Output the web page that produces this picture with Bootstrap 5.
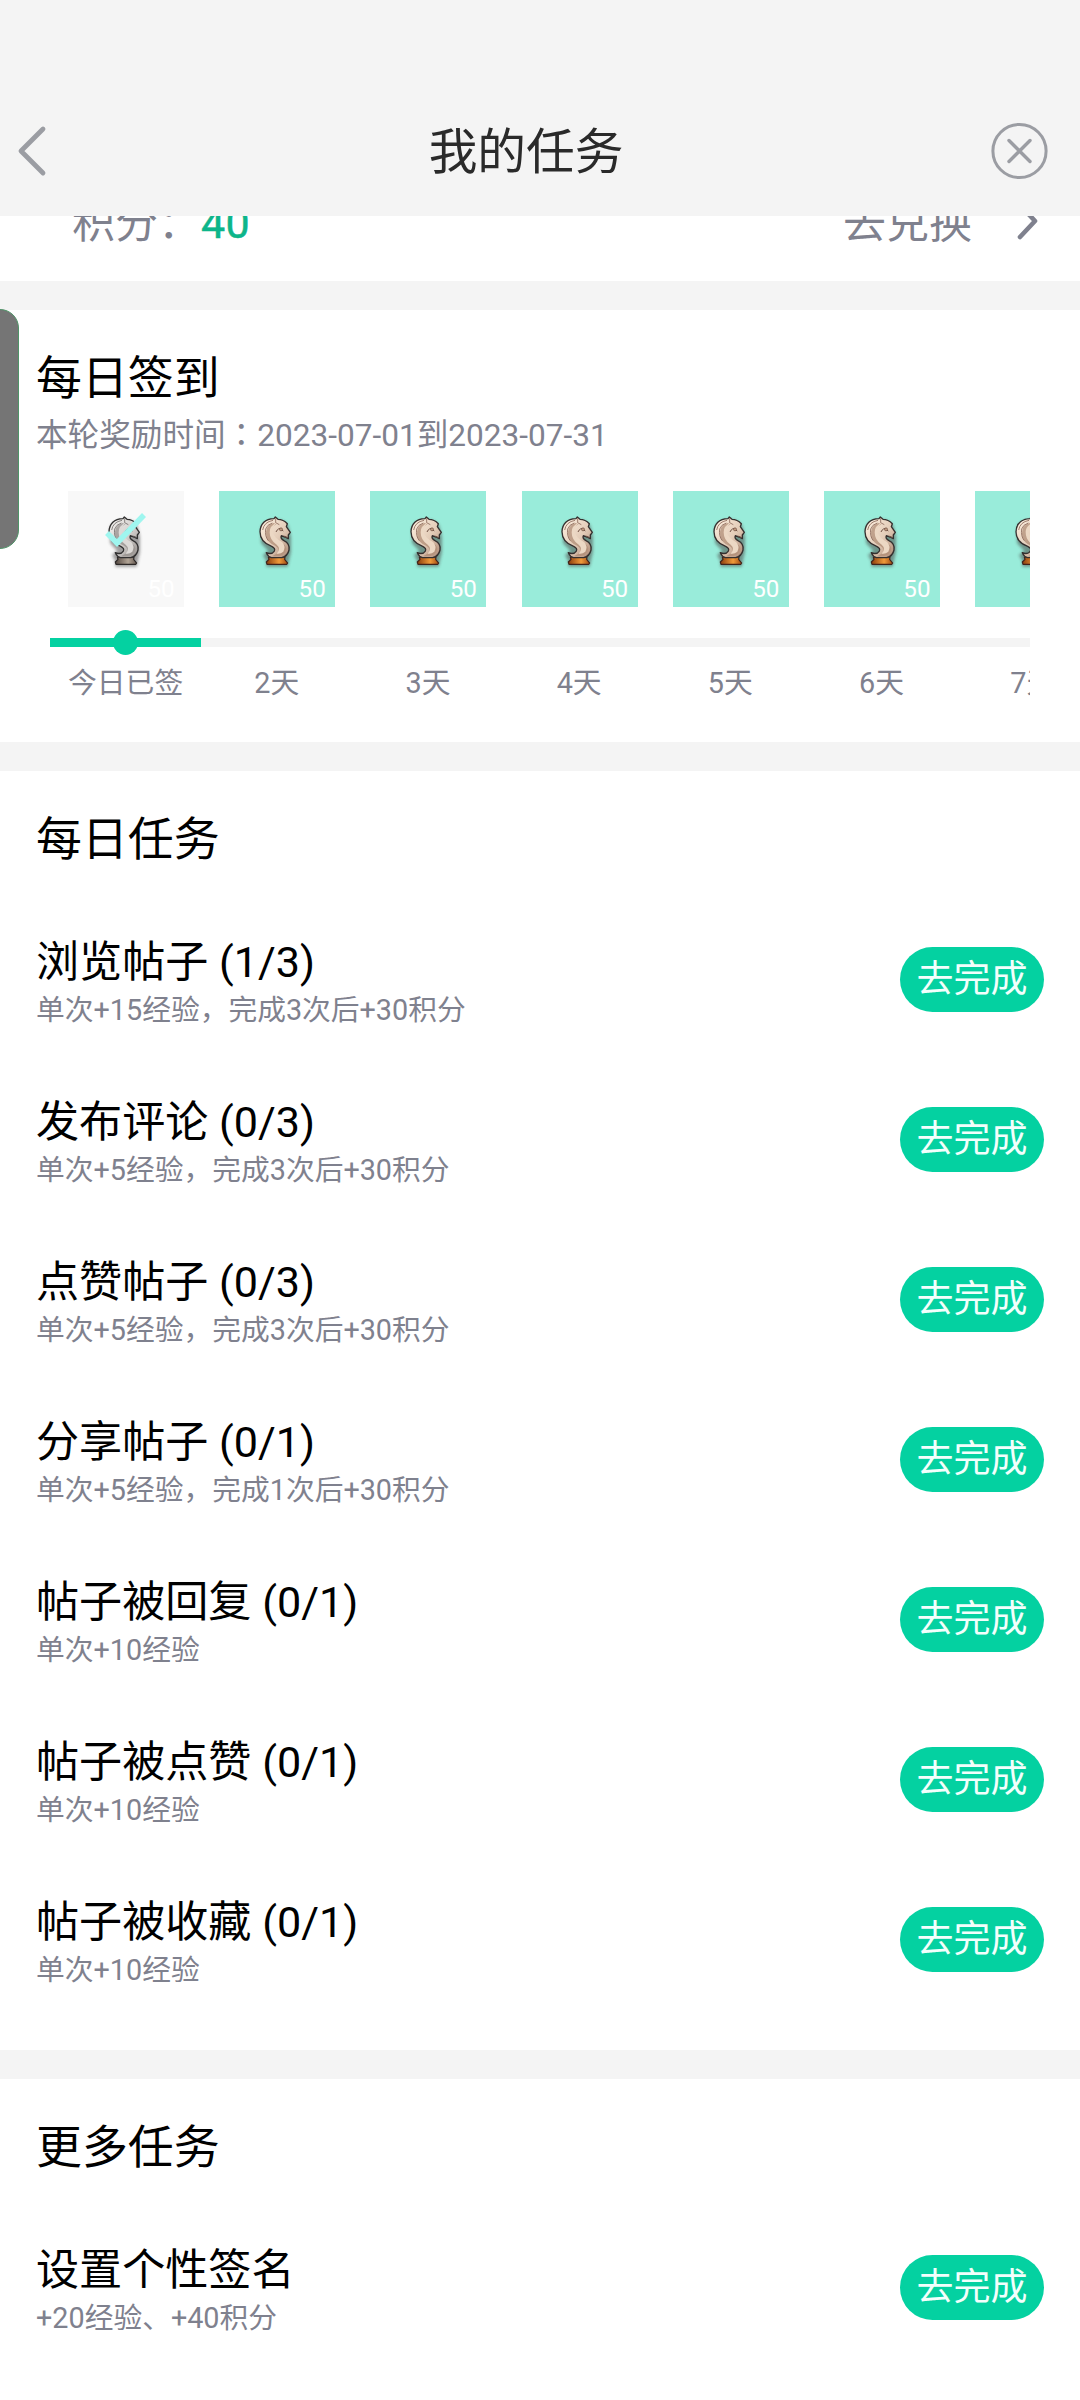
<!DOCTYPE html>
<html lang="zh-CN">
<head>
<meta charset="utf-8">
<meta name="viewport" content="width=device-width, initial-scale=1">
<title>我的任务</title>
<link href="https://cdn.jsdelivr.net/npm/bootstrap@5.3.0/dist/css/bootstrap.min.css" rel="stylesheet">
<style>
  body { font-family: Roboto, "Noto Sans CJK SC", sans-serif; background: #f4f4f4; color: #000; height: 2400px; overflow: hidden; }
  .app-header { height: 216px; padding: 86px 32px 0 16px; color: #2a2a2a; }
  .app-title { font-size: 48.7px; line-height: 130px; left: 0; right: 28px; top: 88px; }
  .app-header svg { display: block; }
  .grey-txt { color: #7f818e; }
  .points-row { height: 65px; margin-bottom: 29px; padding: 0 40px 0 72px; font-size: 43px; line-height: 60px; }
  .points-row > div { margin-top: -23px; height: 60px; }
  .points-row svg { margin: -3px 0 0 44px; }
  .points-value { color: #0db58a; letter-spacing: .4px; -webkit-text-stroke: .5px #0db58a; }
  .panel { margin-bottom: 29px; background: #fff; }
  .panel-title { font-size: 45.9px; line-height: 60px; font-weight: 400; margin: 0; }
  .signin { height: 432px; padding: 38px 50px 0 36px; }
  .signin-period { font-size: 31.6px; line-height: 44px; margin-top: 2px; }
  .signin-days { margin: 33px 0 0 14px; }
  .day { flex: 0 0 151.2px; }
  .day-tile { width: 116px; height: 116px; background: #99ecda; left: .5px; }
  .day-tile svg { position: absolute; left: 36.7px; top: 22.3px; overflow: visible; }
  .day-tile span { position: absolute; right: 9.5px; bottom: 5px; font-size: 24.2px; line-height: 26px; color: #fff; }
  .day-tile.signed { background: #f8f8f8; }
  .day-track { height: 9px; width: 100%; margin: 31px 0; background: #f4f4f4; }
  .day-track.passed { background: #04d1a1; }
  .day-dot { width: 25.5px; height: 25.5px; border-radius: 50%; background: #04d1a1; }
  .day-label { font-size: 28.8px; line-height: 40px; margin-top: -15px; }
  .tasks { padding: 38px 36px 31px; }
  .tasks .panel-title { margin-bottom: 30px; }
  .tasks:last-of-type { padding-bottom: 40px; margin-bottom: 0; }
  .task { height: 160px; }
  .task-name { font-size: 43.1px; line-height: 50px; padding-top: 1px; }
  .task-reward { font-size: 28.75px; line-height: 42px; padding-top: 1px; margin-bottom: -10px; }
  .btn-go { width: 144px; height: 65px; padding: 0; font-size: 37px; line-height: 63px; background: #04d1a1; color: #f2fffc; border: 0; }
  .side-handle { position: absolute; left: -20px; top: 309px; width: 39px; height: 240px; border-radius: 19px; background: #757575; border: 1px solid #4f9468; }
</style>
</head>
<body class="position-relative">
<svg width="0" height="0" class="position-absolute">
  <defs>
    <linearGradient id="body-g" x1="0" y1="0" x2="1" y2="1"><stop offset="0" stop-color="#fff3e4"/><stop offset=".55" stop-color="#e3ccb8"/><stop offset="1" stop-color="#a98470"/></linearGradient>
    <linearGradient id="base-g" x1="0" x2="1"><stop offset="0" stop-color="#8c3d0c"/><stop offset=".6" stop-color="#f09a3a"/><stop offset="1" stop-color="#a34b12"/></linearGradient>
    <filter id="soft" x="-30%" y="-30%" width="160%" height="160%"><feGaussianBlur stdDeviation="4"/></filter>
    <symbol id="knight" viewBox="770 100 120 170" overflow="visible">
      <path d="M784 140C792 112 850 105 866 134L874 168L874 212L864 257H800L800 240L790 222L806 210L784 186Z" fill="#3b2a2a" opacity=".45" filter="url(#soft)" transform="translate(1 4)"/>
      <path d="M807 232L857 232L856 239L865 250L862 254H803L801 247L809 239Z" fill="url(#base-g)" stroke="#40231c" stroke-width="3.5" stroke-linejoin="round"/>
      <path d="M828 112L836 119Q852 119 864 132L861 141L873 158L867 166L867 177L857 172L846 168Q842 176 854 183Q872 192 869 211Q865 230 847 234H817Q806 231 801 219Q817 226 825 214Q829 206 817 200Q782 187 782 156Q784 119 824 117Z" fill="url(#body-g)" stroke="#35302f" stroke-width="4" stroke-linejoin="round"/>
      <path d="M823 130Q795 138 801 171Q806 190 827 198Q843 207 835 220L818 230Q858 232 861 207Q859 193 841 187Q815 178 814 159Q813 143 831 134Z" fill="#b08d77" opacity=".75"/>
      <path d="M834 128Q817 143 820 159Q825 174 849 188Q860 200 852 216Q843 224 832 222Q846 207 832 195Q811 182 811 158Q810 139 834 128Z" fill="#ecd8c4"/>
      <path d="M790 151Q794 127 821 122M807 183Q796 170 799 148Q803 135 819 130M829 116L829 129L840 135" fill="none" stroke="#8b695a" stroke-width="2.5"/>
      <path d="M830 157Q836 143 848 148M841 147L852 154M853 169L864 173" fill="none" stroke="#6f5043" stroke-width="3"/>
      <circle cx="845" cy="149" r="4.5" fill="#c09a80" stroke="#6f5043" stroke-width="2"/>
    </symbol>
  </defs>
</svg>

<header class="app-header d-flex justify-content-between align-items-center">
  <svg width="34" height="52" viewBox="0 0 34 52" fill="none" stroke="#9b9da3" stroke-width="4.8" stroke-linecap="round" stroke-linejoin="round"><path d="M27 4L5 26L27 48"/></svg>
  <h1 class="app-title position-absolute text-center fw-normal m-0">我的任务</h1>
  <svg width="58" height="58" viewBox="0 0 58 58" fill="none" stroke="#9b9da3" stroke-width="3" stroke-linecap="round"><circle cx="29.5" cy="29" r="26.6"/><path d="M19 18.5L40 39.5M40 18.5L19 39.5" stroke-width="3.4"/></svg>
</header>

<section class="points-row bg-white grey-txt overflow-hidden d-flex justify-content-between align-items-start">
  <div>积分：<span class="points-value">40</span></div>
  <div class="d-flex align-items-center">去兑换
    <svg width="24" height="40" viewBox="0 0 24 40" fill="none" stroke="#7f818e" stroke-width="4.6" stroke-linecap="round" stroke-linejoin="round"><path d="M4 3L19 19L4 35"/></svg>
  </div>
</section>

<section class="panel signin">
  <h2 class="panel-title">每日签到</h2>
  <div class="signin-period grey-txt">本轮奖励时间<span lang="zh-TW" style="font-family:'Noto Sans CJK TC'">：</span>2023-07-01到2023-07-31</div>
  <div class="signin-days d-flex overflow-hidden grey-txt">
    <div class="day d-flex flex-column align-items-center">
      <div class="day-tile signed position-relative"><svg width="40" height="56.7"><use href="#knight" style="filter:grayscale(.85)"/><path d="M2 20L12 30L39 2" fill="none" stroke="#9ff6ef" stroke-width="5.5"/></svg><span>50</span></div>
      <div class="day-track passed d-flex justify-content-center align-items-center"><div class="day-dot flex-shrink-0"></div></div>
      <div class="day-label">今日已签</div>
    </div>
    <div class="day d-flex flex-column align-items-center">
      <div class="day-tile position-relative"><svg width="40" height="56.7"><use href="#knight"/></svg><span>50</span></div>
      <div class="day-track"></div><div class="day-label">2天</div>
    </div>
    <div class="day d-flex flex-column align-items-center">
      <div class="day-tile position-relative"><svg width="40" height="56.7"><use href="#knight"/></svg><span>50</span></div>
      <div class="day-track"></div><div class="day-label">3天</div>
    </div>
    <div class="day d-flex flex-column align-items-center">
      <div class="day-tile position-relative"><svg width="40" height="56.7"><use href="#knight"/></svg><span>50</span></div>
      <div class="day-track"></div><div class="day-label">4天</div>
    </div>
    <div class="day d-flex flex-column align-items-center">
      <div class="day-tile position-relative"><svg width="40" height="56.7"><use href="#knight"/></svg><span>50</span></div>
      <div class="day-track"></div><div class="day-label">5天</div>
    </div>
    <div class="day d-flex flex-column align-items-center">
      <div class="day-tile position-relative"><svg width="40" height="56.7"><use href="#knight"/></svg><span>50</span></div>
      <div class="day-track"></div><div class="day-label">6天</div>
    </div>
    <div class="day d-flex flex-column align-items-center">
      <div class="day-tile position-relative"><svg width="40" height="56.7"><use href="#knight"/></svg></div>
      <div class="day-track"></div><div class="day-label">7天</div>
    </div>
  </div>
</section>

<section class="panel tasks">
  <h2 class="panel-title">每日任务</h2>
  <div class="task d-flex justify-content-between align-items-center"><div><div class="task-name">浏览帖子 (1/3)</div><div class="task-reward grey-txt">单次+15经验，完成3次后+30积分</div></div><button class="btn btn-go rounded-pill">去完成</button></div>
  <div class="task d-flex justify-content-between align-items-center"><div><div class="task-name">发布评论 (0/3)</div><div class="task-reward grey-txt">单次+5经验，完成3次后+30积分</div></div><button class="btn btn-go rounded-pill">去完成</button></div>
  <div class="task d-flex justify-content-between align-items-center"><div><div class="task-name">点赞帖子 (0/3)</div><div class="task-reward grey-txt">单次+5经验，完成3次后+30积分</div></div><button class="btn btn-go rounded-pill">去完成</button></div>
  <div class="task d-flex justify-content-between align-items-center"><div><div class="task-name">分享帖子 (0/1)</div><div class="task-reward grey-txt">单次+5经验，完成1次后+30积分</div></div><button class="btn btn-go rounded-pill">去完成</button></div>
  <div class="task d-flex justify-content-between align-items-center"><div><div class="task-name">帖子被回复 (0/1)</div><div class="task-reward grey-txt">单次+10经验</div></div><button class="btn btn-go rounded-pill">去完成</button></div>
  <div class="task d-flex justify-content-between align-items-center"><div><div class="task-name">帖子被点赞 (0/1)</div><div class="task-reward grey-txt">单次+10经验</div></div><button class="btn btn-go rounded-pill">去完成</button></div>
  <div class="task d-flex justify-content-between align-items-center"><div><div class="task-name">帖子被收藏 (0/1)</div><div class="task-reward grey-txt">单次+10经验</div></div><button class="btn btn-go rounded-pill">去完成</button></div>
</section>

<section class="panel tasks">
  <h2 class="panel-title">更多任务</h2>
  <div class="task d-flex justify-content-between align-items-center"><div><div class="task-name">设置个性签名</div><div class="task-reward grey-txt">+20经验、+40积分</div></div><button class="btn btn-go rounded-pill">去完成</button></div>
</section>

<div class="side-handle"></div>
<script src="https://cdn.jsdelivr.net/npm/bootstrap@5.3.0/dist/js/bootstrap.bundle.min.js"></script>
</body>
</html>
